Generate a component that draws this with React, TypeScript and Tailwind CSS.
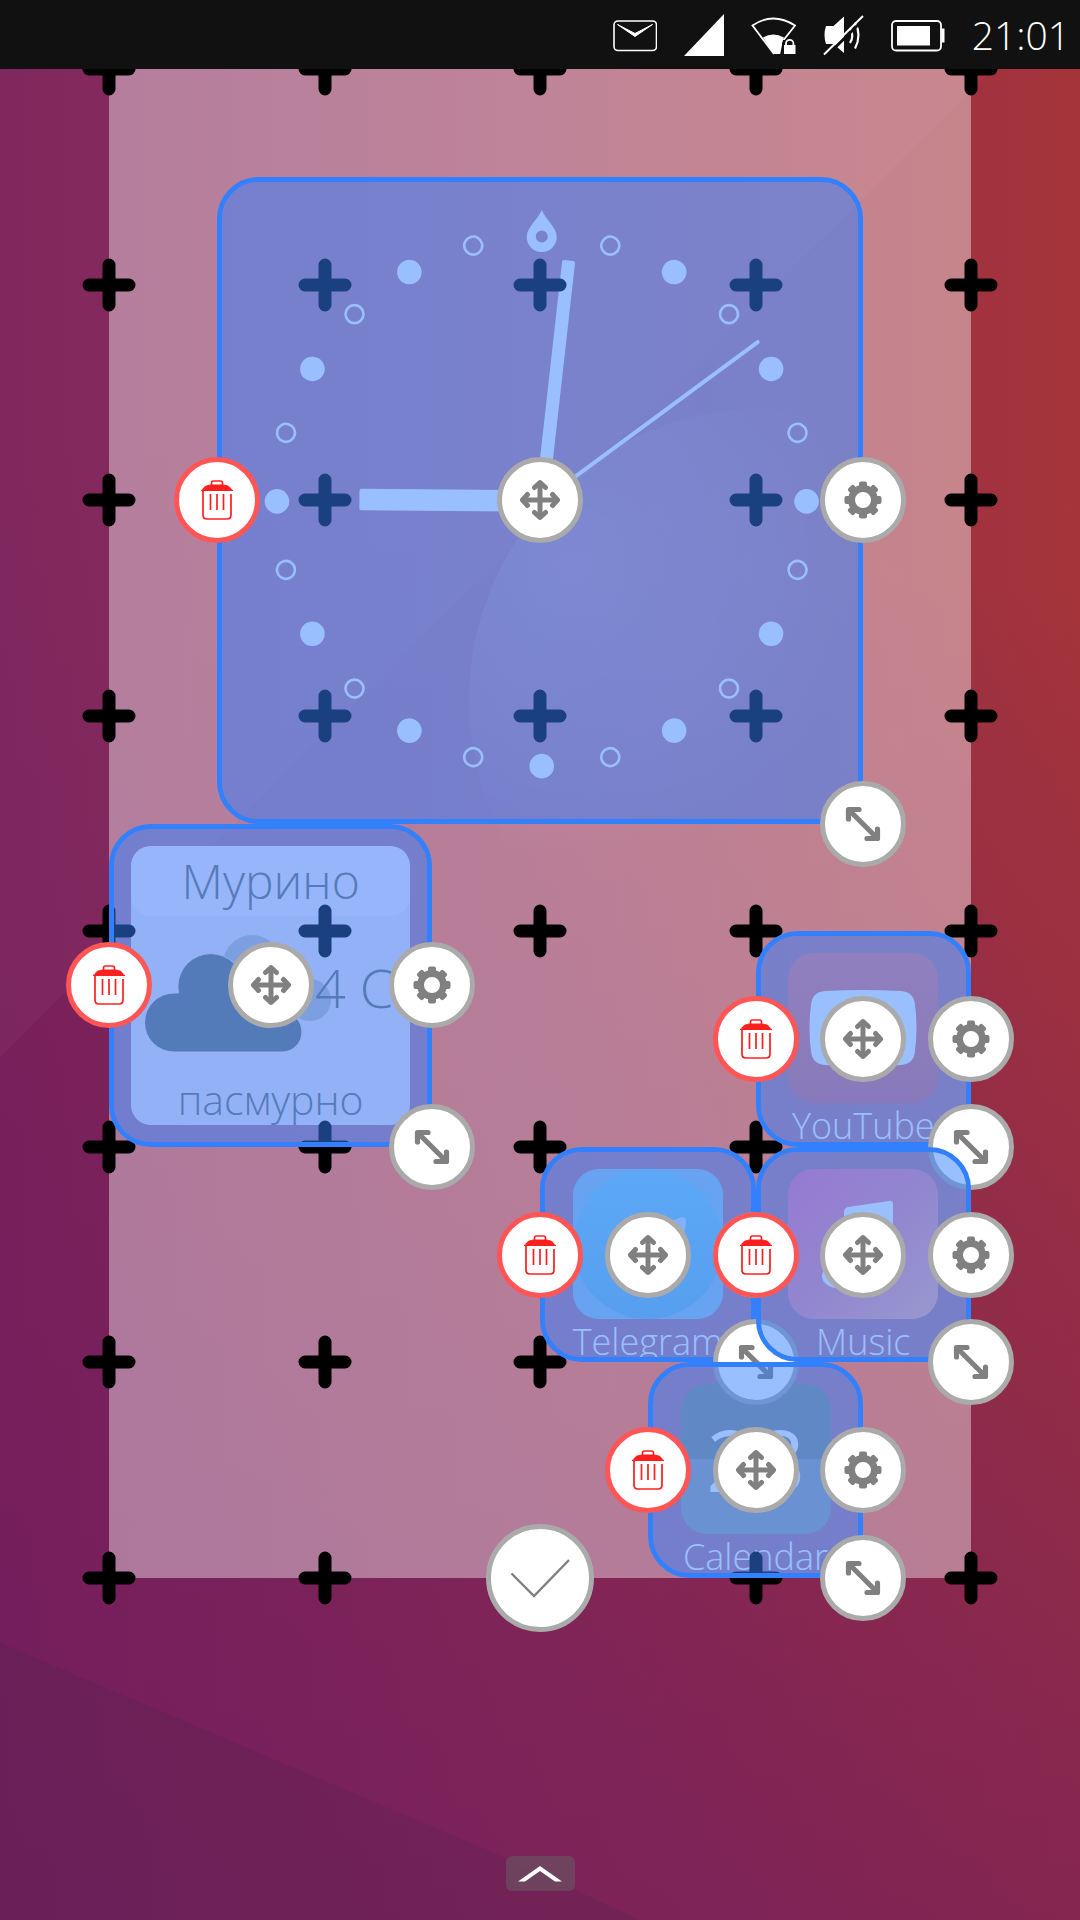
import type { ReactNode } from "react";

type IconKind = "trash" | "move" | "gear" | "resize";

function TrashIcon() {
  return (
    <svg width="32" height="40" viewBox="0 0 32 40" fill="none" stroke="#ff1f1f" strokeWidth="1.700">
      <path d="M10.500 5.500V3Q10.500 1 12.500 1h7Q21.500 1 21.500 3v2.500" />
      <path d="M0 10.300h1.500Q2.500 5.500 10 5h12Q29.500 5.500 30.500 10.300H32v.2H0z" fill="#ff1f1f" strokeWidth="1" />
      <path d="M2 11v24q0 4 4 4h20q4 0 4-4V14" />
      <path d="M9.500 14v16M16 14v16M22.500 14v16" />
    </svg>
  );
}

function MoveIcon() {
  return (
    <svg width="42" height="42" viewBox="0 0 42 42" fill="none" stroke="#808080" strokeWidth="5" strokeLinecap="round" strokeLinejoin="round">
      <path d="M21 4v34M4 21h34" />
      <path d="M15.500 8.500L21 3.500l5.500 5M15.500 33.500l5.500 5 5.500-5M8.500 15.500L3.500 21l5 5.500M33.500 15.500l5 5.500-5 5.500" />
    </svg>
  );
}

const TEETH = [0, 45, 90, 135, 180, 225, 270, 315];

function GearIcon() {
  return (
    <svg width="38" height="38" viewBox="0 0 38 38">
      <circle cx="19" cy="19" r="11.500" fill="none" stroke="#808080" strokeWidth="7" />
      {TEETH.map((a) => (
        <rect key={a} x="15" y="0.500" width="8" height="7" rx="2" fill="#808080" transform={`rotate(${a} 19 19)`} />
      ))}
    </svg>
  );
}

function ResizeIcon() {
  return (
    <svg width="36" height="36" viewBox="0 0 36 36" fill="none" stroke="#808080" strokeWidth="5.200" strokeLinecap="round" strokeLinejoin="round">
      <path d="M4 4l28 28" />
      <path d="M3.500 13V3.500H14M32.500 23v9.500H22" />
    </svg>
  );
}

const ICONS: Record<IconKind, ReactNode> = {
  trash: <TrashIcon />,
  move: <MoveIcon />,
  gear: <GearIcon />,
  resize: <ResizeIcon />,
};

const HANDLES: { kind: IconKind; label: string; className: string }[] = [
  { kind: "trash", label: "Delete", className: "left-0 top-1/2 border-[#ff5555]" },
  { kind: "move", label: "Move", className: "left-1/2 top-1/2 border-[#aaaaaa]" },
  { kind: "gear", label: "Settings", className: "left-full top-1/2 border-[#aaaaaa]" },
  { kind: "resize", label: "Resize", className: "left-full top-full border-[#aaaaaa]" },
];

function EditFrame({ name, className }: { name: string; className: string }) {
  return (
    <div className={`relative ${className}`}>
      <div className="absolute inset-0 rounded-[42px] border-[5px] border-[#3380ff] bg-[#3380ff]/50 bg-clip-padding" />
      {HANDLES.map((h) => (
        <button
          key={h.kind}
          type="button"
          aria-label={`${h.label} ${name}`}
          className={`absolute flex size-[86px] -translate-x-1/2 -translate-y-1/2 items-center justify-center rounded-full border-[5px] bg-white ${h.className}`}
        >
          {ICONS[h.kind]}
        </button>
      ))}
    </div>
  );
}

const HOURS = [30, 60, 90, 120, 150, 180, 210, 240, 270, 300, 330];
const HALVES = [15, 45, 75, 105, 135, 165, 195, 225, 255, 285, 315, 345];

function Clock() {
  return (
    <svg className="size-full" viewBox="0 0 647 647" fill="white">
      <path fillRule="evenodd" d="M325 33C329 43 340 50 340 60a15 15 0 0 1-30 0C310 50 321 43 325 33zM325 53.500a6 6 0 1 0 0 12 6 6 0 1 0 0-12z" />
      {HOURS.map((a) => (
        <circle key={a} cx="325" cy="59.500" r="12.300" transform={`rotate(${a} 325 324.500)`} />
      ))}
      {HALVES.map((a) => (
        <circle key={a} cx="325" cy="59.500" r="9" fill="none" stroke="white" strokeWidth="2.600" transform={`rotate(${a} 325 324.500)`} />
      ))}
      <rect x="314.500" y="142" width="21.500" height="183" rx="2" transform="rotate(270.500 325 324.500)" />
      <rect x="318.500" y="82" width="13" height="242" rx="2" transform="rotate(6.400 325 324.500)" />
      <rect x="323" y="54" width="4" height="270" rx="2" transform="rotate(53.600 325 324.500)" />
    </svg>
  );
}

function Weather() {
  return (
    <div className="flex size-full p-[22px]">
      <div className="flex flex-1 flex-col items-center justify-between overflow-hidden rounded-[20px] bg-[#f2e3ed] font-light text-[#797471]">
        <div className="flex h-[70px] w-full items-center justify-center rounded-[20px] bg-[#f8eaf4] text-[48px] leading-[64px]">
          Мурино
        </div>
        <div className="flex w-full items-start justify-between pl-[14px]">
          <svg width="186" height="118" viewBox="0 0 186 118" className="shrink-0">
            <g fill="#c3bec3">
              <circle cx="107" cy="29" r="29" />
              <circle cx="165" cy="65" r="21" />
            </g>
            <path
              d="M29 117a29.500 29.500 0 0 1 0-59h4.500A32.500 32.500 0 0 1 98 45a30 30 0 0 1 39 32 20 20 0 0 1 0 40z"
              fill="#757673"
              stroke="#f2e3ed"
              strokeWidth="1"
            />
          </svg>
          <span className="-ml-4 flex-1 whitespace-pre text-[54px] leading-[104px]">4 C</span>
        </div>
        <span className="text-[41px] leading-[52px]">пасмурно</span>
      </div>
    </div>
  );
}

function AppTile({ label, className, iconClass, children }: { label: string; className: string; iconClass: string; children: ReactNode }) {
  return (
    <div className={`flex flex-col items-center gap-0.5 overflow-hidden pt-[22px] ${className}`}>
      <div className={`size-[150px] shrink-0 overflow-hidden rounded-[26px] ${iconClass}`}>{children}</div>
      <div className="text-[36px] leading-[41px] font-light text-white">{label}</div>
    </div>
  );
}

const COLS = [0, 1, 2, 3, 4];
const ROWS = [0, 1, 2, 3, 4, 5, 6, 7];

function Crosses() {
  return (
    <div className="flex flex-col justify-between [grid-area:1/1]">
      {ROWS.map((r) => (
        <div key={r} className="flex h-0 items-center justify-between">
          {COLS.map((c) => (
            <div key={c} className="flex w-0 items-center justify-center">
              <svg width="54" height="54" viewBox="-27 -27 54 54" className="shrink-0" stroke="black" strokeWidth="13" strokeLinecap="round">
                <path d="M0-20V20M-20 0H20" />
              </svg>
            </div>
          ))}
        </div>
      ))}
    </div>
  );
}

function Wallpaper() {
  return (
    <svg className="absolute inset-0 size-full" viewBox="0 0 1080 1920" preserveAspectRatio="none">
      <defs>
        <linearGradient id="base" x1="0" y1="0" x2="1" y2="0">
          <stop offset="0" stopColor="#7c2159" />
          <stop offset=".5" stopColor="#922c50" />
          <stop offset="1" stopColor="#a5343a" />
        </linearGradient>
        <linearGradient id="fall" x1="540" y1="500" x2="300" y2="1920" gradientUnits="userSpaceOnUse">
          <stop offset="0" stopColor="#6d1c60" stopOpacity="0" />
          <stop offset="1" stopColor="#6d1c60" stopOpacity=".64" />
        </linearGradient>
        <radialGradient id="ball" gradientUnits="userSpaceOnUse" cx="570" cy="570" r="290">
          <stop offset="0" stopColor="white" stopOpacity=".15" />
          <stop offset="1" stopColor="white" stopOpacity="0" />
        </radialGradient>
      </defs>
      <rect width="1080" height="1920" fill="url(#base)" />
      <rect width="1080" height="1920" fill="url(#fall)" />
      <path d="M0 0H1062L0 1057z" fill="white" fillOpacity=".03" />
      <circle cx="760" cy="700" r="291" fill="url(#ball)" />
      <path d="M0 1643L506 1858L640 1920H0z" fill="#302838" fillOpacity=".12" />
    </svg>
  );
}

function StatusBar() {
  return (
    <header className="relative z-10 flex h-[69px] items-center justify-end gap-[27px] bg-[#111111] pr-[10px] text-white">
      <svg width="44" height="44" viewBox="0 0 44 44" fill="none" stroke="white" strokeWidth="1.600" aria-label="Messages">
        <rect x="1" y="8" width="42.500" height="29.500" rx="4" />
        <path d="M4.500 11.500L22 23.500 39.500 11.500 22 20.500z" fill="white" strokeWidth="1" />
      </svg>
      <svg width="40" height="44" viewBox="0 0 40 44" fill="white" aria-label="Signal">
        <path d="M40 1v42H0z" />
      </svg>
      <svg width="45" height="44" viewBox="0 0 45 44" aria-label="Wi-Fi">
        <path d="M23 41L1.500 12.500Q22 -1.500 44 12.500L31 29" fill="none" stroke="white" strokeWidth="1.800" />
        <path d="M23 41L12 24.500Q22 18.500 33 24.500L31 29v12z" fill="white" />
        <path d="M32 27h13v15H29z" fill="#111111" />
        <path d="M33 32h11.500v9H33z" fill="white" />
        <path d="M35 33v-2.500a3.700 3.700 0 0 1 7.400 0V33" fill="none" stroke="white" strokeWidth="1.800" />
      </svg>
      <svg width="41" height="44" viewBox="0 0 41 44" fill="none" stroke="white" aria-label="Muted">
        <path d="M3 13h7.500L21 3.500V40L10.500 31H3Q0 22 3 13z" fill="white" stroke="none" />
        <path d="M32 9.500q7 12.500 0 26M27 15q4.500 8 0 15" strokeWidth="2.200" />
        <path d="M2.500 44L42 5" stroke="#111111" strokeWidth="3" />
        <path d="M1 41.500L40 3" strokeWidth="2" />
      </svg>
      <svg width="54" height="44" viewBox="0 0 54 44" aria-label="Battery">
        <rect x="1" y="8" width="49" height="29.500" rx="4" fill="none" stroke="white" strokeWidth="1.800" />
        <rect x="6" y="13" width="33" height="19.500" fill="white" />
        <rect x="50.500" y="15.500" width="3" height="14" fill="white" />
      </svg>
      <time className="text-[39px] leading-[44px] font-light">21:01</time>
    </header>
  );
}

const FRAME_GRID = "grid grid-cols-8 grid-rows-[repeat(14,minmax(0,1fr))] min-h-0 [grid-area:1/1]";
const CLOCK = "col-[2/8] row-[2/8]";
const WEATHER = "col-[1/4] row-[8/11]";
const YOUTUBE = "col-[7/9] row-[9/11]";
const TELEGRAM = "col-[5/7] row-[11/13]";
const MUSIC = "col-[7/9] row-[11/13]";
const CALENDAR = "col-[6/8] row-[13/15]";

export default function App() {
  return (
    <div className="relative flex min-h-screen flex-col overflow-hidden font-['Open_Sans','Noto_Sans',sans-serif]">
      <Wallpaper />
      <StatusBar />
      <main className="relative px-[109px]">
        <div className="grid aspect-[862/1509] w-full grid-cols-1 grid-rows-1 bg-white/40">
          <div className={FRAME_GRID}>
            <div className={CLOCK}>
              <Clock />
            </div>
            <div className={WEATHER}>
              <Weather />
            </div>
            <AppTile label="YouTube" className={YOUTUBE} iconClass="bg-linear-to-b from-[#ed807d] to-[#dd7475]">
              <svg className="size-full" viewBox="0 0 150 150">
                <path d="M37 38Q75 36 113 38 126 39 127 52 130 75 127 98 126 111 113 112 75 115 37 112 24 111 23 98 20 75 23 52 24 39 37 38z" fill="white" />
                <path d="M64 58l28 17-28 17z" fill="#e57a79" />
              </svg>
            </AppTile>
            <AppTile label="Telegram" className={TELEGRAM} iconClass="bg-[#9bc6e3]">
              <svg className="size-full" viewBox="0 0 150 150">
                <defs>
                  <linearGradient id="tg" x1="0" y1="0" x2="0" y2="1">
                    <stop offset="0" stopColor="#85d0ee" />
                    <stop offset="1" stopColor="#7bbddd" />
                  </linearGradient>
                </defs>
                <circle cx="75" cy="75" r="75" fill="url(#tg)" />
                <path d="M31 82L106 49q8-3 7 6l-12 56q-2 8-9 3L58 92z" fill="#d1e2f2" />
              </svg>
            </AppTile>
            <AppTile label="Music" className={MUSIC} iconClass="bg-linear-to-br from-[#f974a3] via-[#ef8ca0] to-[#ffb09c]">
              <svg className="size-full" viewBox="0 0 150 150" fill="white">
                <path d="M56 43q0-4 4-5l41-6q4-1 4 3v68H95V54L66 59v50H56z" />
                <ellipse cx="50" cy="107" rx="16" ry="12" />
                <ellipse cx="90" cy="100" rx="15" ry="12" />
              </svg>
            </AppTile>
            <AppTile label="Calendar" className={CALENDAR} iconClass="bg-linear-to-b from-[#8d9089] from-50% to-[#a1a4a5] to-50%">
              <div className="flex size-full items-center justify-between text-white">
                <span className="h-2 w-[6px] bg-white" />
                <span className="text-[86px] leading-[150px] font-normal">28</span>
                <span className="h-2 w-[6px] bg-white" />
              </div>
            </AppTile>
          </div>
          <Crosses />
          <div className={FRAME_GRID}>
            <EditFrame name="clock" className={CLOCK} />
            <EditFrame name="weather" className={WEATHER} />
            <EditFrame name="YouTube" className={YOUTUBE} />
            <EditFrame name="Telegram" className={TELEGRAM} />
            <EditFrame name="Music" className={MUSIC} />
            <EditFrame name="Calendar" className={CALENDAR} />
          </div>
        </div>
        <button
          type="button"
          aria-label="Done"
          className="absolute bottom-0 left-1/2 flex size-[108px] -translate-x-1/2 translate-y-1/2 items-center justify-center rounded-full border-[5px] border-[#aaaaaa] bg-white"
        >
          <svg width="60" height="40" viewBox="0 0 60 40" fill="none" stroke="#808080" strokeWidth="2.400">
            <path d="M1.500 15.500L24 38 59 2" />
          </svg>
        </button>
      </main>
      <footer className="relative mt-auto flex justify-center pb-[29px]">
        <button type="button" aria-label="Open app drawer" className="flex h-[35px] w-[69px] items-center justify-center rounded-md bg-[#6c5060]/70">
          <svg width="44" height="16" viewBox="0 0 44 16" fill="white">
            <path d="M22 0L44 15.500H37L22 5 7 15.500H0z" />
          </svg>
        </button>
      </footer>
    </div>
  );
}
